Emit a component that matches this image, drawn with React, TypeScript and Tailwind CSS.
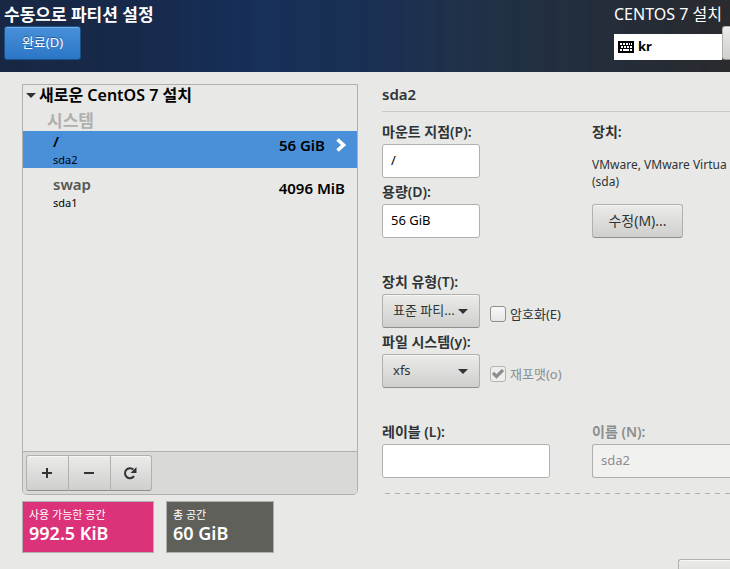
import type { ReactNode } from 'react';
import clsx from 'clsx';

const BUTTON =
  'border border-[#b0b0ad] border-b-[#8f8f8c] bg-linear-to-b from-[#ebebea] to-[#cfcfcd] text-[#2e3436] shadow-[inset_0_1px_0_#f6f6f5]';
const ENTRY = 'h-[34px] rounded-[3px] border border-[#b0b0ad] px-2 pb-0.5 text-[13px]';

function Field({ id, label, muted, children }: { id: string; label: string; muted?: boolean; children: ReactNode }) {
  return (
    <div className="flex flex-col items-start gap-0.5">
      <label
        htmlFor={id}
        className={clsx('text-sm leading-5 font-semibold', muted ? 'text-[#8b8e8f]' : 'text-[#2e3436]')}
      >
        {label}
      </label>
      {children}
    </div>
  );
}

function Combo({ id, value }: { id: string; value: string }) {
  return (
    <div className="grid w-[98px] items-center">
      <select
        id={id}
        className={clsx(BUTTON, 'col-start-1 row-start-1 h-[34px] w-full appearance-none truncate rounded-[3px] pr-6 pl-2.5 text-[13px]')}
      >
        <option>{value}</option>
      </select>
      <svg
        viewBox="0 0 10 5"
        className="pointer-events-none col-start-1 row-start-1 mr-3 h-[5px] w-2.5 justify-self-end"
        aria-hidden="true"
      >
        <path d="M0 0h10L5 5z" fill="#2e3436" />
      </svg>
    </div>
  );
}

function Check({ id, label, checked, disabled }: { id: string; label: string; checked?: boolean; disabled?: boolean }) {
  return (
    <div className="flex items-center gap-1 pt-1.5">
      <span className="grid place-items-center">
        <input
          id={id}
          type="checkbox"
          defaultChecked={checked}
          disabled={disabled}
          className={clsx(
            'col-start-1 row-start-1 size-4 appearance-none rounded-[3px] border',
            disabled ? 'border-[#b4b4b2] bg-[#eeeeed]' : 'border-[#8f8f8c] bg-linear-to-b from-[#f8f8f8] to-[#e6e6e5]',
          )}
        />
        {checked && (
          <svg viewBox="0 0 12 10" className="pointer-events-none col-start-1 row-start-1 h-2.5 w-3" aria-hidden="true">
            <path d="M1 4L4.5 7.5L11 1" fill="none" stroke="#8b8e8f" strokeWidth="3.2" />
          </svg>
        )}
      </span>
      <label htmlFor={id} className={clsx('text-[13px] leading-5', disabled ? 'text-[#8b8e8f]' : 'text-[#2e3436]')}>
        {label}
      </label>
    </div>
  );
}

function Header() {
  return (
    <header className="flex items-start justify-between bg-[#15294a] bg-[repeating-linear-gradient(90deg,transparent_0px,transparent_13px,rgba(10,25,50,0.08)_21px,transparent_29px,transparent_38px),linear-gradient(90deg,#182743_0%,#172a4c_20%,#16305a_35%,#1a3054_50%,#203148_65%,#252d39_85%,#2a2b2d_100%)] pl-1 text-white">
      <div className="pt-[3px] pb-3">
        <h1 className="text-[17px] leading-[23px] font-semibold">수동으로 파티션 설정</h1>
        <button
          type="button"
          className="h-[34px] w-[77px] rounded-[3px] border border-[#1c5187] bg-linear-to-b from-[#4a90d9] to-[#2a76c6] text-[13px] shadow-[inset_0_1px_0_#76aee6] text-shadow-[0_-1px_0_#1f5c9d]"
        >
          완료(D)
        </button>
      </div>
      <div className="w-[116px] shrink-0 pt-[3px]">
        <p className="text-base leading-[23px] whitespace-nowrap">CENTOS 7 설치</p>
        <div className="flex items-end">
          <button type="button" className="flex h-[26px] w-[108px] items-center gap-1 bg-white pl-1 text-[13px] font-bold text-black">
            <KeyboardIcon />
            kr
          </button>
          <button type="button" aria-label="도움말" className={clsx(BUTTON, 'h-[34px] flex-1 rounded-l-[3px] border-r-0')} />
        </div>
      </div>
    </header>
  );
}

function KeyboardIcon() {
  return (
    <svg viewBox="0 0 16 12" className="h-3 w-4" shapeRendering="crispEdges" aria-hidden="true">
      <rect width="16" height="12" rx="1" fill="#000" />
      <path
        d="M2 2h2v2H2zM5 2h2v2H5zM8 2h2v2H8zM11 2h1v2h-1zM13 2h1v2h-1zM3 5h2v2H3zM6 5h2v2H6zM9 5h2v2H9zM12 5h2v2h-2zM2 8h2v2H2zM5 8h6v2H5zM12 8h2v2h-2z"
        fill="#fff"
      />
    </svg>
  );
}

function MountRow({ name, device, size, selected }: { name: string; device: string; size: string; selected?: boolean }) {
  return (
    <li className={clsx('flex h-[37px] items-start justify-between pl-[30px] text-black', selected ? 'bg-[#4a90d9] pr-2.5' : 'pr-3')}>
      <div>
        <p className={clsx('text-[15px] leading-[21px] font-semibold', !selected && 'text-[#555753]')}>{name}</p>
        <p className="text-[11px] leading-4">{device}</p>
      </div>
      <div className="flex items-center gap-2.5 pt-1">
        <span className="text-[15px] leading-5 font-semibold">{size}</span>
        {selected && (
          <svg viewBox="0 0 12 14" className="h-3.5 w-3" aria-hidden="true">
            <path d="M2.5 1.5L8.5 7L2.5 12.5" fill="none" stroke="#fff" strokeWidth="3.6" />
          </svg>
        )}
      </div>
    </li>
  );
}

function PartitionList() {
  return (
    <section className="flex min-h-0 flex-1 flex-col rounded-b-[5px] border border-[#b0b0ad]">
      <div className="flex-1">
        <h2 className="flex items-center gap-[3px] pl-[3px] text-base leading-[21px] font-semibold text-black">
          <svg viewBox="0 0 10 5" className="h-[5px] w-2.5" aria-hidden="true">
            <path d="M0 0h10L5 5z" fill="#2e3436" />
          </svg>
          새로운 CentOS 7 설치
        </h2>
        <h3 className="pt-[5px] pl-6 text-[17px] leading-5 font-semibold text-[#b0b0ae]">시스템</h3>
        <ul className="flex flex-col gap-1.5">
          <MountRow name="/" device="sda2" size="56 GiB" selected />
          <MountRow name="swap" device="sda1" size="4096 MiB" />
        </ul>
      </div>
      <div className="flex rounded-b-[4px] border-t border-[#b0b0ad] bg-[#d9d9d7] p-[3px]">
        <button type="button" aria-label="추가" className={clsx(BUTTON, 'grid h-9 w-[43px] place-items-center rounded-l-[3px] pr-0.5')}>
          <svg viewBox="0 0 10 10" className="size-2.5" aria-hidden="true">
            <path d="M4 0h2v4h4v2H6v4H4V6H0V4h4z" fill="#2e3436" />
          </svg>
        </button>
        <button type="button" aria-label="제거" className={clsx(BUTTON, 'grid h-9 w-[42px] place-items-center border-l-0 pr-0.5')}>
          <svg viewBox="0 0 10 10" className="size-2.5" aria-hidden="true">
            <path d="M0 4h10v2H0z" fill="#2e3436" />
          </svg>
        </button>
        <button type="button" aria-label="새로 고침" className={clsx(BUTTON, 'grid h-9 w-[41px] place-items-center rounded-r-[3px] border-l-0 pr-0.5')}>
          <svg viewBox="0 0 14 14" className="size-3.5" aria-hidden="true">
            <path d="M11 10.2A5 5 0 1 1 10.4 3.6" fill="none" stroke="#2e3436" strokeWidth="2" />
            <path d="M13.5 1v6H7.5z" fill="#2e3436" />
          </svg>
        </button>
      </div>
    </section>
  );
}

function SpaceBox({ label, value, className }: { label: string; value: string; className: string }) {
  return (
    <div className={clsx('h-[52px] border border-[#b0b0ad] px-1.5 pt-[5px] text-white', className)}>
      <p className="text-[11px] leading-4">{label}</p>
      <p className="text-lg leading-[21px] font-semibold">{value}</p>
    </div>
  );
}

function Details() {
  return (
    <section className="min-w-0 flex-1 overflow-hidden text-[#2e3436]">
      <h2 className="border-b border-[#cbcbc9] pb-[7px] text-[15px] leading-5 font-semibold">sda2</h2>
      <div className="grid grid-cols-[210px_1fr] pt-2.5">
        <div className="flex flex-col gap-1">
          <Field id="mount" label="마운트 지점(P):">
            <input id="mount" defaultValue="/" className={clsx(ENTRY, 'w-[98px] bg-white text-black')} />
          </Field>
          <Field id="capacity" label="용량(D):">
            <input id="capacity" defaultValue="56 GiB" className={clsx(ENTRY, 'w-[98px] bg-white text-black')} />
          </Field>
        </div>
        <div className="flex flex-col items-start">
          <h3 className="text-sm leading-5 font-semibold">장치:</h3>
          <p className="pt-3.5 text-xs leading-[17px] whitespace-nowrap">
            VMware, VMware Virtua
            <br />
            (sda)
          </p>
          <button type="button" className={clsx(BUTTON, 'mt-3.5 h-[34px] w-[91px] rounded-[3px] text-sm')}>
            수정(M)...
          </button>
        </div>
      </div>
      <div className="flex flex-col gap-1 pt-[34px]">
        <div className="flex items-end gap-2.5">
          <Field id="device-type" label="장치 유형(T):">
            <Combo id="device-type" value="표준 파티..." />
          </Field>
          <div className="pb-1">
            <Check id="encrypt" label="암호화(E)" />
          </div>
        </div>
        <div className="flex items-end gap-2.5">
          <Field id="fs" label="파일 시스템(y):">
            <Combo id="fs" value="xfs" />
          </Field>
          <div className="pb-1">
            <Check id="reformat" label="재포맷(o)" checked disabled />
          </div>
        </div>
      </div>
      <div className="grid grid-cols-[210px_1fr] pt-[34px]">
        <Field id="label" label="레이블 (L):">
          <input id="label" className={clsx(ENTRY, 'w-[168px] bg-white text-black')} />
        </Field>
        <Field id="name" label="이름 (N):" muted>
          <input
            id="name"
            defaultValue="sda2"
            disabled
            className={clsx(ENTRY, 'w-full rounded-r-none border-r-0 bg-[#f1f1f0] text-[#8b8e8f]')}
          />
        </Field>
      </div>
      <div className="mt-[15px] ml-[3px] h-px bg-[repeating-linear-gradient(90deg,#b0b0ad_0px,#b0b0ad_5px,transparent_5px,transparent_10px)]" />
      <div className="flex justify-end pt-[65px]">
        <button type="button" aria-label="설정 업데이트" className={clsx(BUTTON, 'h-[34px] w-[52px] rounded-l-[3px] border-r-0')} />
      </div>
    </section>
  );
}

export default function App() {
  return (
    <div className="flex h-screen flex-col overflow-hidden bg-[#e8e8e6] font-['Noto_Sans','Noto_Sans_CJK_KR',sans-serif]">
      <Header />
      <main className="flex min-h-0 flex-1 gap-6 pt-3 pl-[22px]">
        <div className="flex w-[336px] shrink-0 flex-col gap-1.5 pb-4">
          <PartitionList />
          <div className="flex gap-3">
            <SpaceBox label="사용 가능한 공간" value="992.5 KiB" className="w-[132px] bg-[#dc3279]" />
            <SpaceBox label="총 공간" value="60 GiB" className="w-[108px] bg-[#60605b]" />
          </div>
        </div>
        <Details />
      </main>
    </div>
  );
}
